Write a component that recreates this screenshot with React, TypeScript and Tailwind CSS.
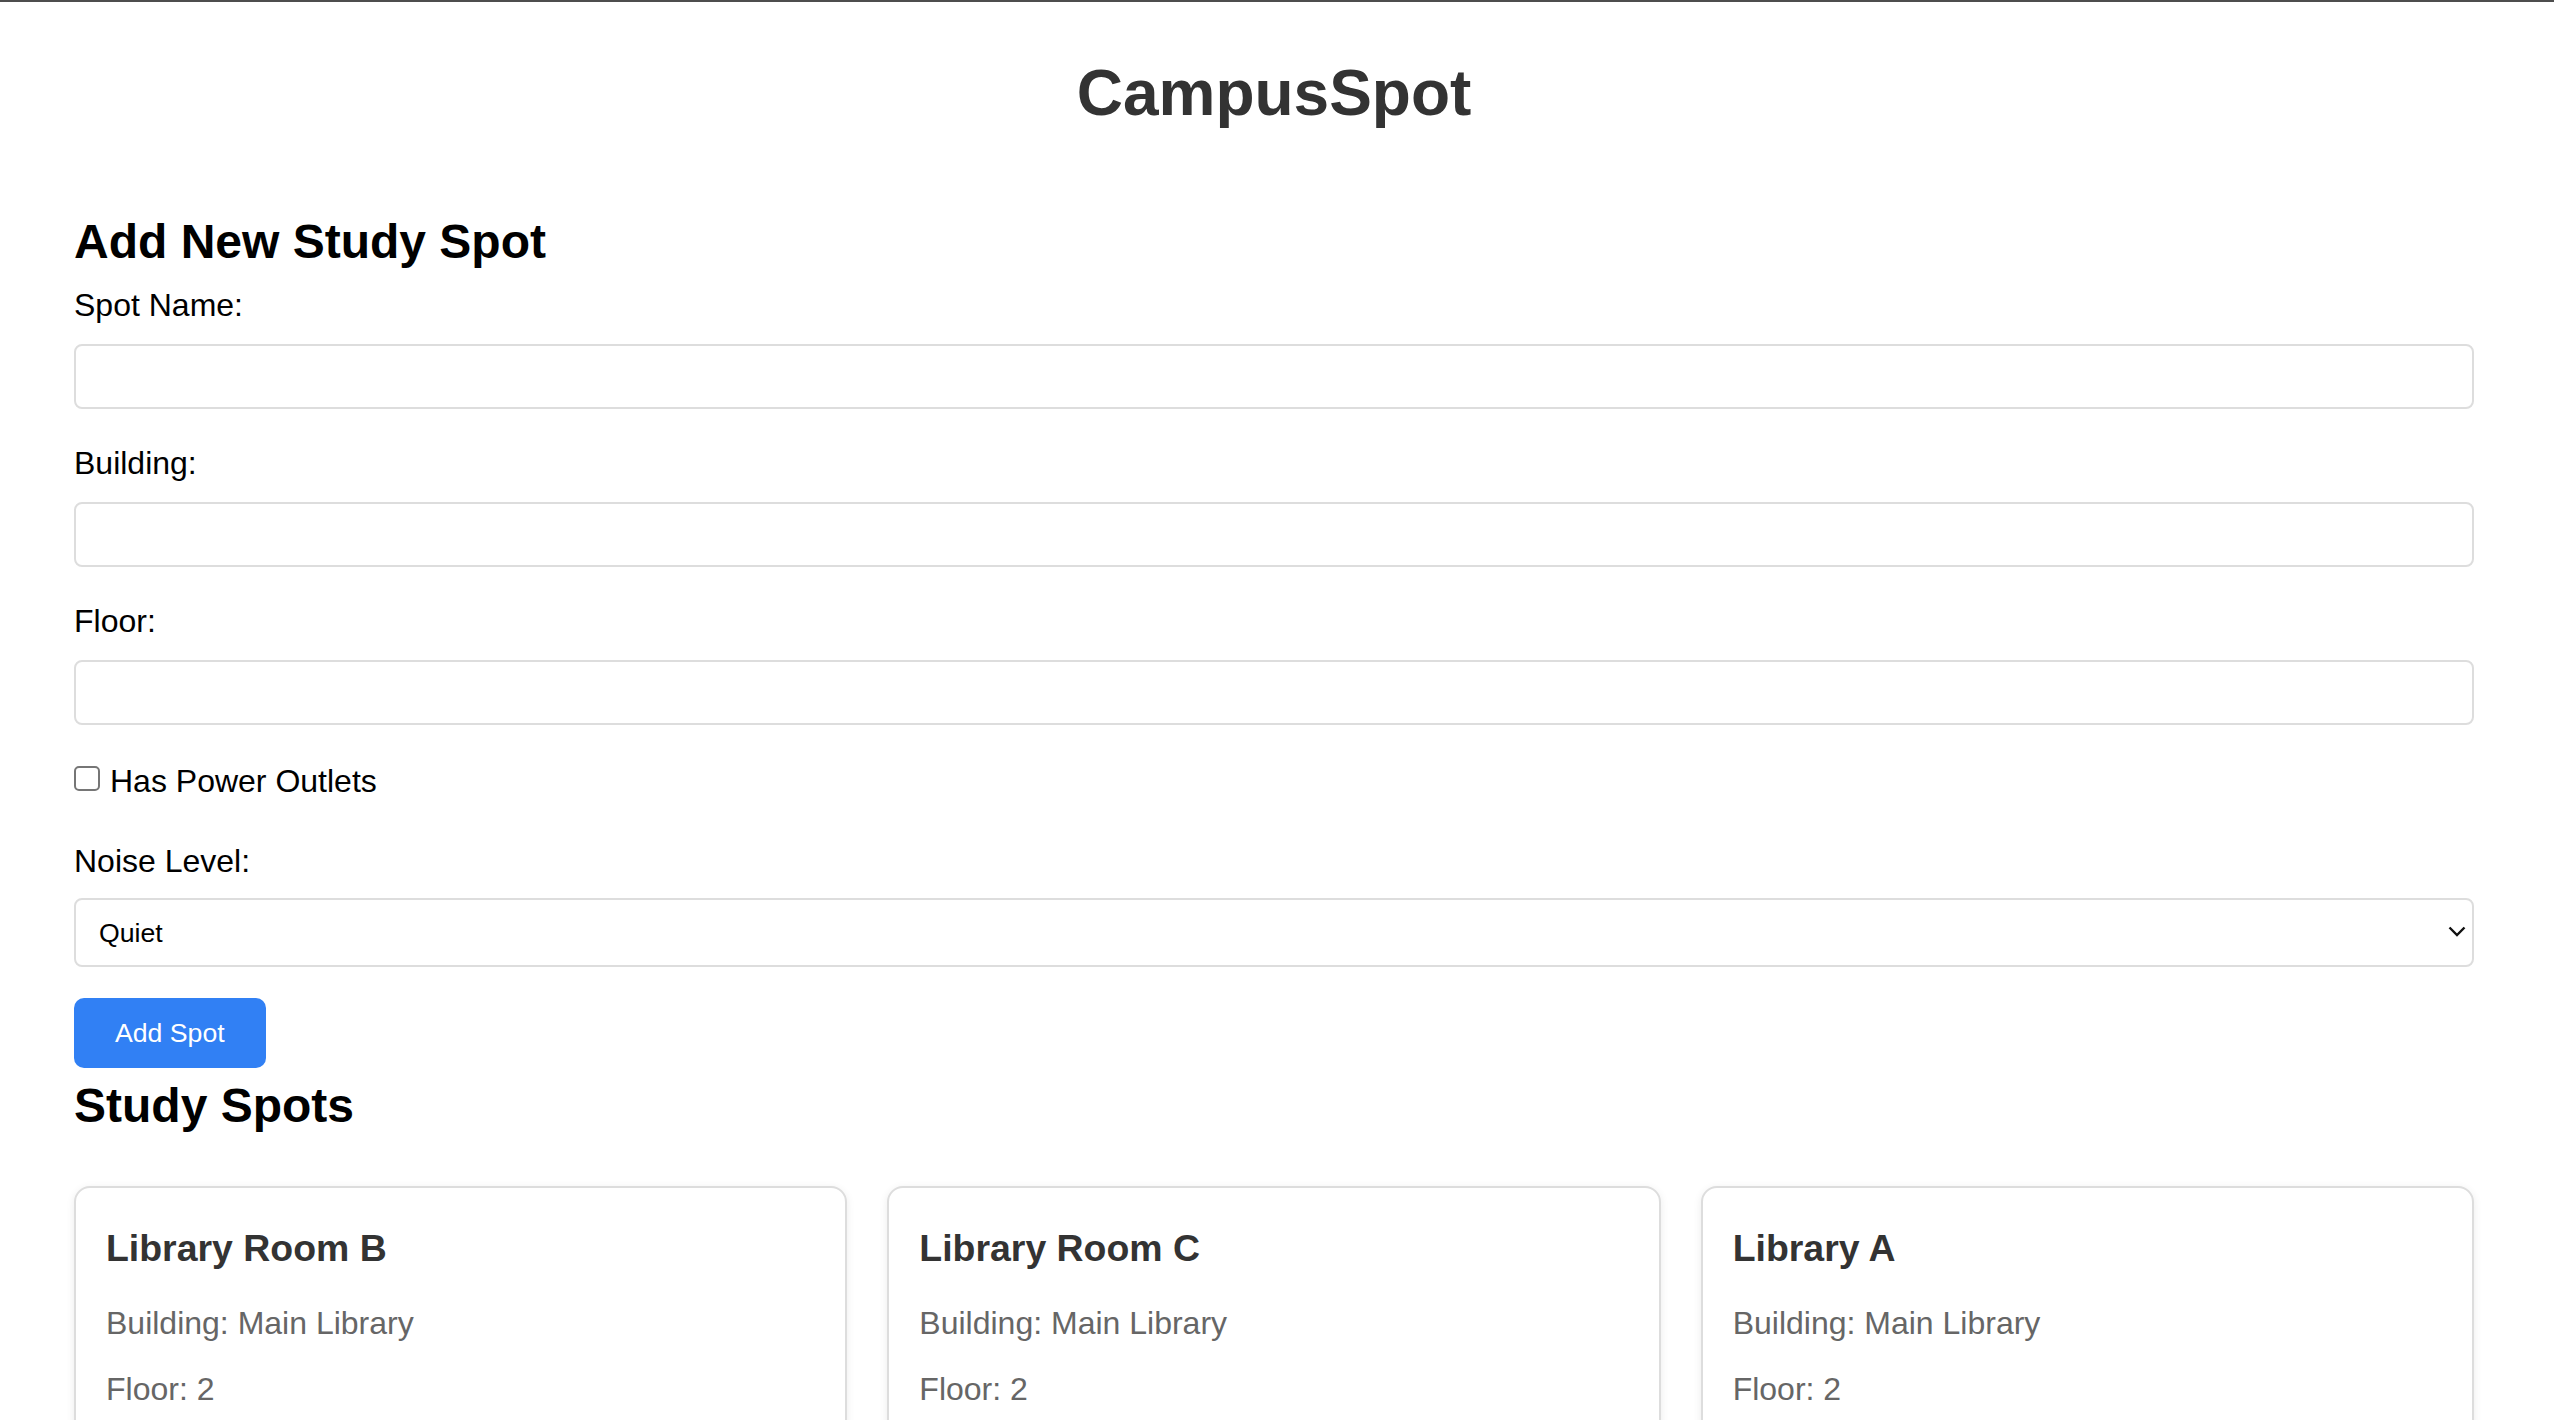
import { useState } from 'react'

type Spot = {
  name: string
  building: string
  floor: string
  outlets: boolean
  noise: string
}

const SPOTS: Spot[] = [
  { name: 'Library Room B', building: 'Main Library', floor: '2', outlets: true, noise: 'Quiet' },
  { name: 'Library Room C', building: 'Main Library', floor: '2', outlets: false, noise: 'Quiet' },
  { name: 'Library A', building: 'Main Library', floor: '2', outlets: true, noise: 'Moderate' },
]

function Field({ label }: { label: string }) {
  return (
    <div className="mb-[36px]">
      <label className="block text-[32px] leading-[37px]">{label}</label>
      <input
        type="text"
        className="mt-[20px] block h-[65px] w-full rounded-[8px] border-2 border-[#dddddd] bg-white px-[16px] text-[26px] outline-none"
      />
    </div>
  )
}

function SpotCard({ spot }: { spot: Spot }) {
  return (
    <article className="rounded-[16px] border-2 border-[#dddddd] bg-white px-[30px] pt-[39px] pb-[30px] shadow-[0_2px_8px_rgba(0,0,0,0.08)]">
      <h3 className="text-[37.44px] leading-[43px] font-bold text-[#333333]">{spot.name}</h3>
      <p className="mt-[35px] text-[32px] leading-[37px] text-[#666666]">Building: {spot.building}</p>
      <p className="mt-[29px] text-[32px] leading-[37px] text-[#666666]">Floor: {spot.floor}</p>
      <p className="mt-[29px] text-[32px] leading-[37px] text-[#666666]">
        Power Outlets: {spot.outlets ? 'Yes' : 'No'}
      </p>
      <p className="mt-[29px] text-[32px] leading-[37px] text-[#666666]">Noise Level: {spot.noise}</p>
    </article>
  )
}

export default function App() {
  const [checked, setChecked] = useState(false)

  return (
    <div className="min-h-screen bg-white font-['Liberation_Sans',Arial,sans-serif] text-black">
      <div className="h-[2px] bg-[#4d4d4d]" />
      <div className="pl-[74px] pr-[80px] pb-[80px]">
        <h1 className="mt-[54px] text-center text-[64px] leading-[74px] font-bold text-[#333333]">CampusSpot</h1>

        <h2 className="mt-[84px] text-[48px] leading-[55px] font-bold">Add New Study Spot</h2>
        <form className="mt-[18px]" onSubmit={(e) => e.preventDefault()}>
          <Field label="Spot Name:" />
          <Field label="Building:" />
          <Field label="Floor:" />

          <label className="mt-[38px] flex items-start gap-[10px] text-[32px] leading-[37px]">
            <input
              type="checkbox"
              checked={checked}
              onChange={() => setChecked(!checked)}
              className="mt-[3px] h-[25px] w-[26px] appearance-none rounded-[5px] border-2 border-[#767676] bg-white"
            />
            <span>Has Power Outlets</span>
          </label>

          <label className="mt-[43px] block text-[32px] leading-[37px]">Noise Level:</label>
          <div className="relative mt-[18px]">
            <select className="block h-[69px] w-full appearance-none rounded-[8px] border-2 border-[#dddddd] bg-white pl-[23px] text-[26.67px] text-black outline-none">
              <option>Quiet</option>
              <option>Moderate</option>
              <option>Loud</option>
            </select>
            <svg
              className="pointer-events-none absolute right-[8px] top-[28px]"
              width="18"
              height="11"
              viewBox="0 0 18 11"
              fill="none"
            >
              <polyline points="1.5,1.5 9,9 16.5,1.5" stroke="#111111" strokeWidth="2.4" />
            </svg>
          </div>

          <button
            type="submit"
            className="mt-[31px] flex h-[70px] items-center rounded-[10px] bg-[#3180f4] px-[41px] text-[26.67px] text-white"
          >
            Add Spot
          </button>
        </form>

        <h2 className="mt-[10px] text-[48px] leading-[55px] font-bold">Study Spots</h2>
        <div className="mt-[53px] grid grid-cols-3 gap-[40px]">
          {SPOTS.map((s) => (
            <SpotCard key={s.name} spot={s} />
          ))}
        </div>
      </div>
    </div>
  )
}
